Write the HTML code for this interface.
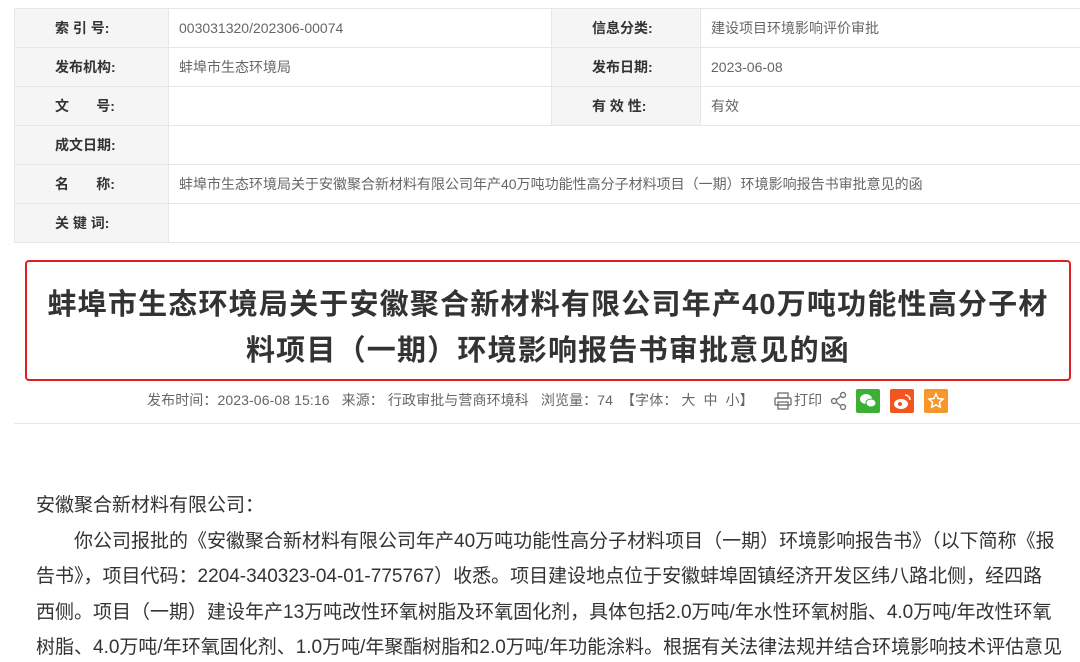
<!DOCTYPE html>
<html><head><meta charset="utf-8">
<style>
*{margin:0;padding:0;box-sizing:border-box}
body{width:1080px;height:662px;overflow:hidden;background:#fff;font-family:"Liberation Sans","Noto Sans CJK SC",sans-serif;position:relative}
table{position:absolute;left:14px;top:8px;border-collapse:collapse;width:1080px}
td{height:39px;border:1px solid #e6e6e6;font-size:14px;color:#666;padding-left:10px;white-space:nowrap}
td.l{background:#f5f5f5;color:#333;font-weight:bold;padding-left:40px}
.box{position:absolute;left:25px;top:260px;width:1046px;height:121px;border:2px solid #e02020;border-radius:4px}
.t{position:absolute;left:-2px;width:1100px;text-align:center;font-size:29px;letter-spacing:1.2px;font-weight:bold;color:#333;white-space:nowrap}
.meta{position:absolute;left:147px;top:390px;font-size:14px;color:#666;white-space:nowrap;letter-spacing:0.1px}
.ic{position:absolute;top:389px;width:24px;height:24px;border-radius:2px}
.sep{position:absolute;left:14px;top:423px;width:1066px;height:1px;background:#e8e8e8}
.p{position:absolute;left:36px;font-size:19px;color:#333;white-space:nowrap}
</style></head><body>
<table>
<tr><td class="l" style="width:154px">索 引 号:</td><td style="width:383px">003031320/202306-00074</td><td class="l" style="width:149px">信息分类:</td><td>建设项目环境影响评价审批</td></tr>
<tr><td class="l">发布机构:</td><td>蚌埠市生态环境局</td><td class="l">发布日期:</td><td>2023-06-08</td></tr>
<tr><td class="l">文&nbsp;&nbsp;&nbsp;&nbsp;&nbsp;&nbsp;&nbsp;号:</td><td></td><td class="l">有 效 性:</td><td>有效</td></tr>
<tr><td class="l">成文日期:</td><td colspan="3"></td></tr>
<tr><td class="l">名&nbsp;&nbsp;&nbsp;&nbsp;&nbsp;&nbsp;&nbsp;称:</td><td colspan="3">蚌埠市生态环境局关于安徽聚合新材料有限公司年产40万吨功能性高分子材料项目（一期）环境影响报告书审批意见的函</td></tr>
<tr><td class="l">关 键 词:</td><td colspan="3"></td></tr>
</table>
<div class="box"></div>
<div class="t" style="top:281px">蚌埠市生态环境局关于安徽聚合新材料有限公司年产40万吨功能性高分子材</div>
<div class="t" style="top:327px">料项目（一期）环境影响报告书审批意见的函</div>
<div class="meta">发布时间：2023-06-08 15:16&nbsp;&nbsp;&nbsp;来源：&nbsp;行政审批与营商环境科&nbsp;&nbsp;&nbsp;浏览量：74&nbsp;&nbsp;【字体：&nbsp;大&nbsp;&nbsp;中&nbsp;&nbsp;小】</div>
<svg style="position:absolute;left:773px;top:391px" width="20" height="20" viewBox="0 0 20 20" fill="none" stroke="#777" stroke-width="1.4"><rect x="5" y="2" width="10" height="5"/><rect x="2" y="7" width="16" height="7" rx="1"/><rect x="5" y="11" width="10" height="7"/></svg>
<div class="meta" style="left:794px">打印</div>
<svg style="position:absolute;left:830px;top:391px" width="18" height="20" viewBox="0 0 18 20" fill="none" stroke="#777" stroke-width="1.4"><circle cx="13" cy="4" r="2.5"/><circle cx="4" cy="10" r="2.5"/><circle cx="13" cy="16" r="2.5"/><path d="M6 9l5-4M6 11l5 4"/></svg>
<div class="ic" style="left:856px;background:#3cb034"><svg width="24" height="24"><ellipse cx="10" cy="10" rx="6" ry="5" fill="#fff"/><ellipse cx="15" cy="14" rx="5" ry="4" fill="#fff" stroke="#3cb034"/></svg></div>
<div class="ic" style="left:890px;background:#f2551f"><svg width="24" height="24"><ellipse cx="11" cy="15" rx="7" ry="5" fill="#fff"/><circle cx="10" cy="15" r="2" fill="#f2551f"/><path d="M15 6a5 5 0 0 1 5 5" stroke="#fff" stroke-width="1.5" fill="none"/></svg></div>
<div class="ic" style="left:924px;background:#f7962b"><svg width="24" height="24"><path d="M12 5l2.1 4.5 4.9.6-3.6 3.3 1 4.8L12 15.8 7.6 18.2l1-4.8L5 10.1l4.9-.6z" fill="none" stroke="#fff" stroke-width="1.5"/></svg></div>
<div class="sep"></div>
<div class="p" style="top:490px">安徽聚合新材料有限公司：</div>
<div class="p" style="top:526px">　　你公司报批的《安徽聚合新材料有限公司年产40万吨功能性高分子材料项目（一期）环境影响报告书》（以下简称《报</div>
<div class="p" style="top:561px">告书》，项目代码：2204-340323-04-01-775767）收悉。项目建设地点位于安徽蚌埠固镇经济开发区纬八路北侧，经四路</div>
<div class="p" style="top:597px">西侧。项目（一期）建设年产13万吨改性环氧树脂及环氧固化剂，具体包括2.0万吨/年水性环氧树脂、4.0万吨/年改性环氧</div>
<div class="p" style="top:632px">树脂、4.0万吨/年环氧固化剂、1.0万吨/年聚酯树脂和2.0万吨/年功能涂料。根据有关法律法规并结合环境影响技术评估意见</div>
</body></html>
